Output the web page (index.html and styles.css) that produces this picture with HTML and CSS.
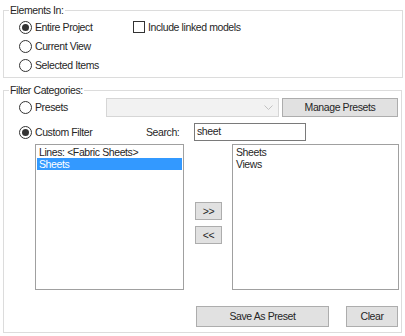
FILE: index.html
```html
<!DOCTYPE html>
<html lang="en">
<head>
    <meta charset="UTF-8">
    <title>Filter Settings</title>
    <link rel="stylesheet" href="styles.css">
</head>
<body>
    <div class="group group-elements">
        <span class="group-title">Elements In:</span>
        <div class="elements-grid">
            <label class="radio checked"><span class="radio-dot"></span>Entire Project</label>
            <label class="check"><span class="check-box"></span>Include linked models</label>
            <label class="radio"><span class="radio-dot"></span>Current View</label>
            <label class="radio"><span class="radio-dot"></span>Selected Items</label>
        </div>
    </div>

    <div class="group group-filter">
        <span class="group-title">Filter Categories:</span>
        <div class="row row-presets">
            <label class="radio opt-presets"><span class="radio-dot"></span>Presets</label>
            <div class="combo">
                <svg class="combo-arrow" width="9" height="5" viewBox="0 0 9 5"><path d="M0.5 0.5 L4.5 4.5 L8.5 0.5" fill="none" stroke="#c2c2c2" stroke-width="1"/></svg>
            </div>
            <button class="btn btn-manage">Manage Presets</button>
        </div>
        <div class="row row-custom">
            <label class="radio checked opt-custom"><span class="radio-dot"></span>Custom Filter</label>
            <span class="search-label">Search:</span>
            <div class="search-input">sheet</div>
        </div>
        <div class="row row-lists">
            <div class="list list-left">
                <div class="list-item">Lines: &lt;Fabric Sheets&gt;</div>
                <div class="list-item selected">Sheets</div>
            </div>
            <div class="move-buttons">
                <button class="btn btn-move">&gt;&gt;</button>
                <button class="btn btn-move">&lt;&lt;</button>
            </div>
            <div class="list list-right">
                <div class="list-item">Sheets</div>
                <div class="list-item">Views</div>
            </div>
        </div>
        <div class="row row-actions">
            <button class="btn btn-save">Save As Preset</button>
            <button class="btn btn-clear">Clear</button>
        </div>
    </div>
</body>
</html>
```

FILE: styles.css
```css
body {
    margin: 0;
    padding: 0;
    width: 405px;
    height: 336px;
    background-color: #ffffff;
    color: #262626;
    font-family: "Liberation Sans", Arial, sans-serif;
    font-size: 10.5px;
    letter-spacing: -0.4px;
    line-height: 13px;
    overflow: hidden;
}
.group {
    position: relative;
    border: 1px solid #dcdcdc;
    box-sizing: border-box;
}
.group-title {
    position: absolute;
    top: -7px;
    left: 5px;
    padding: 0 1px;
    background-color: #ffffff;
}
.group-elements {
    margin: 10px 2px 0 3px;
    height: 68px;
    padding: 9px 0 0 15px;
}
.elements-grid {
    display: grid;
    grid-template-columns: 114px auto;
    grid-auto-rows: 14px;
    row-gap: 5px;
}
.elements-grid .radio {
    grid-column: 1;
}
.elements-grid .check {
    grid-column: 2;
    grid-row: 1;
}
.radio,
.check {
    display: flex;
    align-items: center;
    gap: 3px;
    white-space: nowrap;
}
.radio-dot {
    width: 13px;
    height: 13px;
    box-sizing: border-box;
    border: 1px solid #333333;
    border-radius: 50%;
    display: flex;
    align-items: center;
    justify-content: center;
    flex-shrink: 0;
}
.radio.checked .radio-dot::after {
    content: "";
    width: 7px;
    height: 7px;
    border-radius: 50%;
    background-color: #333333;
}
.check-box {
    width: 12px;
    height: 12px;
    box-sizing: border-box;
    border: 1px solid #333333;
    flex-shrink: 0;
}
.group-filter {
    margin: 12px 3px 0 3px;
    height: 243px;
    padding: 7px 0 0 15px;
}
.row {
    display: flex;
    align-items: center;
}
.row-presets {
    height: 19px;
}
.opt-presets {
    width: 87px;
}
.combo {
    width: 173px;
    height: 19px;
    box-sizing: border-box;
    border: 1px solid #d6d6d6;
    background-color: #f2f2f2;
    display: flex;
    align-items: center;
    justify-content: flex-end;
    padding-right: 5px;
}
.btn {
    font-family: inherit;
    font-size: inherit;
    letter-spacing: inherit;
    line-height: 13px;
    color: #262626;
    background-color: #e1e1e1;
    border: 1px solid #adadad;
    box-sizing: border-box;
    padding: 0;
    margin: 0;
}
.btn-manage {
    width: 116px;
    height: 19px;
    margin-left: 3px;
}
.row-custom {
    margin-top: 6px;
    height: 18px;
}
.opt-custom {
    width: 127px;
}
.search-label {
    width: 48px;
}
.search-input {
    width: 112px;
    height: 18px;
    box-sizing: border-box;
    border: 1px solid #7a7a7a;
    padding: 1px 2px;
}
.row-lists {
    margin-top: 3px;
    height: 146px;
    align-items: stretch;
}
.list {
    box-sizing: border-box;
    border: 1px solid #a0a0a0;
    padding: 1px;
    background-color: #ffffff;
}
.list-left {
    width: 149px;
    margin-left: 16px;
}
.list-right {
    width: 167px;
}
.list-item {
    height: 12px;
    line-height: 12px;
    padding-left: 2px;
    white-space: nowrap;
}
.list-item.selected {
    background-color: #3399ff;
    color: #ffffff;
}
.move-buttons {
    width: 48px;
    display: flex;
    flex-direction: column;
    gap: 6px;
    padding: 58px 0 0 11px;
    box-sizing: border-box;
}
.btn-move {
    width: 27px;
    height: 18px;
}
.row-actions {
    margin-top: 16px;
    padding-left: 177px;
    gap: 17px;
}
.btn-save {
    width: 133px;
    height: 21px;
}
.btn-clear {
    width: 52px;
    height: 21px;
}
```
